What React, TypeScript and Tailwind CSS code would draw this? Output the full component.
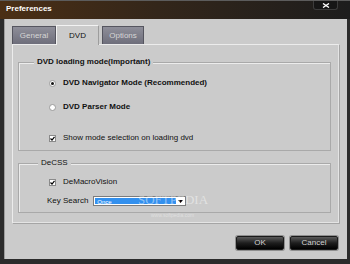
import React from 'react';

function Radio({ checked }: { checked?: boolean }) {
  return (
    <span className="w-[7px] h-[7px] rounded-full bg-white border border-[#9a9a9a] flex items-center justify-center shrink-0">
      {checked && <span className="w-[3px] h-[3px] rounded-full bg-[#111]" />}
    </span>
  );
}

function Check() {
  return (
    <span className="w-[7px] h-[7px] bg-white border border-[#8a8a8a] flex items-center justify-center shrink-0">
      <svg width="5" height="5" viewBox="0 0 5 5">
        <path d="M0.5 2.5 L2 4 L4.5 0.8" stroke="#000" strokeWidth="1.2" fill="none" />
      </svg>
    </span>
  );
}

function Tab({ label, active }: { label: string; active?: boolean }) {
  if (active) {
    return (
      <div className="w-[43px] h-[20px] -mb-px bg-[#cbcbcb] border border-b-0 border-t-[#f2f2f2] border-l-[#f2f2f2] border-r-[#9d9d9d] flex items-center justify-center text-[#111] relative z-10">
        {label}
      </div>
    );
  }
  return (
    <div className="w-[44px] h-[18px] bg-[linear-gradient(#8e8e99,#6e6e7b)] border border-b-0 border-[#55555f] flex items-center justify-center text-[#d6d6d6]">
      {label}
    </div>
  );
}

function Button({ label }: { label: string }) {
  return (
    <button className="w-[48px] h-[14px] rounded-[2px] border border-[#1a1a1a] bg-[linear-gradient(#5a5a5a,#1e1e1e_50%,#000)] text-[#d2d2d2] text-[8px] leading-none shadow-[0_0_0_1px_#8f8f8f]">
      {label}
    </button>
  );
}

function Group({ label, bold, labelLeft, className, children }: {
  label: string; bold?: boolean; labelLeft: string; className: string; children: React.ReactNode;
}) {
  return (
    <div className={`relative w-[313px] border border-[#a9a9a9] shadow-[inset_1px_1px_0_#ececec] pl-[30px] ${className}`}>
      <span className={`absolute top-[-6px] ${labelLeft} px-[3px] bg-[#cbcbcb] leading-[10px] ${bold ? 'font-bold' : ''}`}>
        {label}
      </span>
      {children}
    </div>
  );
}

export default function App() {
  return (
    <div className="w-[350px] h-[264px] bg-[#2b2b2b] flex flex-col font-['Liberation_Sans',Arial,sans-serif] text-[8px] overflow-hidden">
      <div className="h-[19px] shrink-0 relative border-t border-[#5c5c5c] bg-[linear-gradient(to_right,#4b2f15,#33261a_45%,#1d1d1d)] flex items-center pl-[6px]">
        <span className="text-white font-bold text-[8px] -mt-[2px]">Preferences</span>
        <div className="absolute right-[12px] top-0 w-[25px] h-[9px] rounded-b-[3px] bg-[#161616] border border-t-0 border-[#3c3c3c] flex items-center justify-center">
          <svg width="8" height="5" viewBox="0 0 8 5">
            <path d="M1 0.5 L7 4.5 M7 0.5 L1 4.5" stroke="#fff" strokeWidth="1.4" />
          </svg>
        </div>
      </div>

      <div className="ml-[4px] mr-[3px] h-[240px] bg-[#cbcbcb] border-l border-[#9c9c9c] pl-[7px] pt-[5px] relative">
        <div className="flex items-end h-[20px]">
          <Tab label="General" />
          <Tab label="DVD" active />
          <div className="w-[3px]" />
          <div className="w-[42px] h-[18px] bg-[linear-gradient(#8e8e99,#6e6e7b)] border border-b-0 border-[#55555f] flex items-center justify-center text-[#d6d6d6]">
            Options
          </div>
        </div>

        <div className="w-[327px] h-[179px] border border-t-[#ececec] border-l-[#ececec] border-r-[#e4e4e4] border-b-[#e4e4e4] shadow-[1px_1px_0_#a5a5a5] pl-[5px] pt-[17px] text-[#111]">
          <Group label="DVD loading mode(Important)" bold labelLeft="left-[15px]" className="h-[89px] pt-[16px]">
            <div className="flex items-center gap-[7px] font-bold h-[8px]">
              <Radio checked />
              <span>DVD Navigator Mode (Recommended)</span>
            </div>
            <div className="flex items-center gap-[7px] mt-[16px] h-[8px] font-bold">
              <Radio />
              <span>DVD Parser Mode</span>
            </div>
            <div className="flex items-center gap-[7px] mt-[23px] h-[8px]">
              <Check />
              <span>Show mode selection on loading dvd</span>
            </div>
          </Group>

          <Group label="DeCSS" labelLeft="left-[19px]" className="h-[50px] mt-[12px] pt-[14px]">
            <div className="flex items-center gap-[7px] h-[8px]">
              <Check />
              <span>DeMacroVision</span>
            </div>
            <div className="flex items-center gap-[5px] mt-[10px] h-[10px] -ml-[2px]">
              <span>Key Search</span>
              <div className="w-[93px] h-[10px] border border-[#7c7c7c] bg-white flex p-px">
                <div className="flex-1 bg-[#3390ee] text-white text-[6px] leading-[8px] pl-[2px]">Once</div>
                <div className="w-[8px] bg-white flex items-center justify-center">
                  <svg width="5" height="3" viewBox="0 0 5 3">
                    <path d="M0 0 L5 0 L2.5 3 Z" fill="#000" />
                  </svg>
                </div>
              </div>
            </div>
          </Group>
        </div>

        <div className="flex justify-end gap-[6px] mt-[13px] pr-[9px]">
          <Button label="OK" />
          <Button label="Cancel" />
        </div>

        <div className="absolute left-[133px] top-[174px] pointer-events-none text-white/45 font-['Liberation_Serif',serif] text-[13px] leading-none">
          SOFTPEDIA
        </div>
        <div className="absolute left-[146px] top-[194px] pointer-events-none text-white/40 text-[5px] leading-none">
          www.softpedia.com
        </div>
      </div>
    </div>
  );
}
